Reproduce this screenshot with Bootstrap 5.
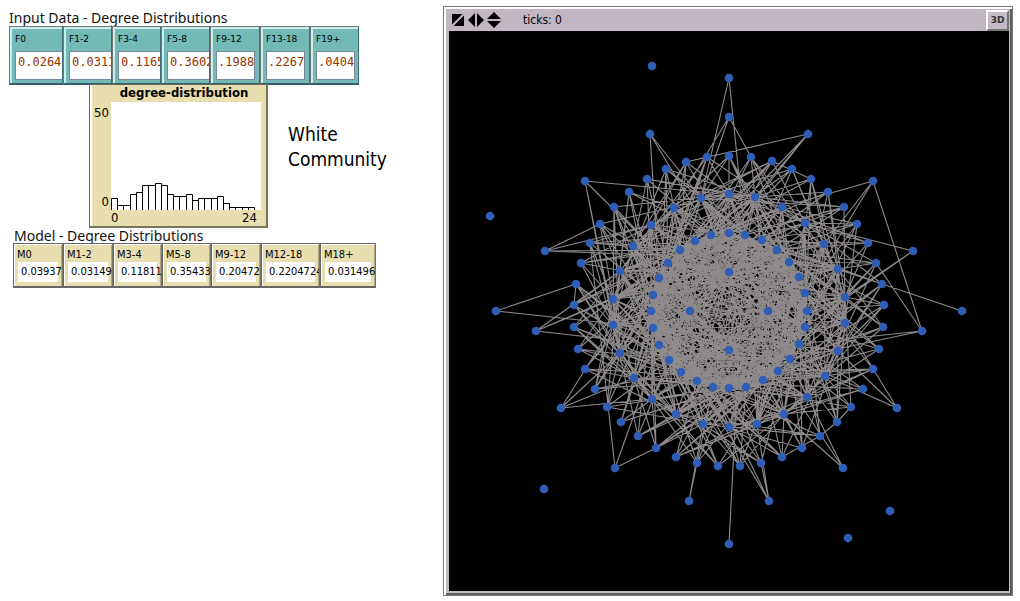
<!DOCTYPE html>
<html lang="en">
<head>
<meta charset="utf-8">
<meta name="viewport" content="width=device-width, initial-scale=1">
<title>Degree Distributions</title>
<link href="https://cdn.jsdelivr.net/npm/bootstrap@5.3.0/dist/css/bootstrap.min.css" rel="stylesheet">
<style>
body{font-family:"DejaVu Sans Condensed","DejaVu Sans",sans-serif;color:#000;background:#fff}
.model-page{display:grid;grid-template-columns:435px minmax(0,1fr);padding:6px 7px 4px 8px}
.section-title{font-family:"Noto Sans","Open Sans",sans-serif;font-size:14px;line-height:16px;font-weight:400;margin:0;padding-left:1px;color:#111}
.section-title.model{padding-left:6px;line-height:15px}
.inputs{margin-left:1px}
.reports{margin-left:5px}
.beige{background:repeating-conic-gradient(#dfe6a4 0 25%,#efd8bc 0 50%) 0 0/4px 4px}
.teal{background:repeating-conic-gradient(#6cc4b0 0 25%,#78b0bc 0 50%) 0 0/4px 4px}
.tile{flex:0 0 auto;width:49px;overflow:hidden;line-height:12px}
.tile.wide{width:50px}
.tile.wider{width:56px}
.tile.widest{width:59px}
.input-tile{height:59px;padding:7px 0 0 5px;border:solid;border-width:1px 1px 2px;border-color:#777 #456d78 #355e6b #777;box-shadow:inset 2px 2px #c9f0ec}
.input-tile:first-child{width:54px}
.input-tile label{display:block;font-family:"DejaVu Sans",sans-serif;font-size:9px;line-height:10px;margin-bottom:7px;white-space:nowrap}
.input-tile input{display:block;width:60px;height:29px;border:1px solid #789;border-radius:0;padding:0 0 8px 2px;font:12px/18px "DejaVu Sans Mono",monospace;color:#993300;background:#fff}
.input-tile.full input{width:39px;padding-left:1px}
.report-tile{height:45px;padding:5px 3px 0 3px;border:1px solid #666;border-right-color:#776;border-bottom-width:2px;box-shadow:inset 1px 1px #fff,inset -1px 0 #aaa585;font-size:11px}
.report-tile span{display:block;white-space:nowrap}
.report-tile output{display:block;height:20px;margin:1px 1px 0;padding:0 0 0 3px;line-height:19px;background:#fff;white-space:nowrap}
.plot{width:179px;height:144px;margin:-1px 0 0 81px;border:1px solid #666;border-bottom:2px solid #77755a;border-right:2px solid #77755a;box-shadow:inset 2px 0 #fff;display:grid;grid-template-columns:21px 150px;grid-template-rows:17px 108px 16px;font-size:13px;line-height:16px}
.plot h2{grid-column:1/3;font-size:13px;line-height:15px;font-weight:700;text-align:center;margin:0 0 0 17px}
.plot .axis{text-align:right;padding:3px 2px 0 0}
.histogram{background:#fff}
.note{font-size:19px;line-height:25px;margin:37px 0 0 20px}
.world{border:1px solid #777;box-shadow:inset 2px 2px #fff,inset -2px -2px #566260;padding:0 3px 4px 5px;background:repeating-conic-gradient(#b9c0ba 0 25%,#c8acca 0 50%) 0 0/4px 4px}
.world-bar{height:24px;font-size:12px;padding:2px 0 0 0}
.world-bar button{width:23px;height:21px;border:solid;border-width:2px;border-color:#fff #777 #777 #fff;background:#c4bcc4;font:bold 9px/14px "DejaVu Sans",sans-serif;padding:0;color:#333}
.world-bar .resize-icon{background:none;border:0;width:18px;height:18px}
.resize-icon svg{display:block;margin:auto}
.world-view,.histogram{display:block}
.world-view{width:100%;height:auto;background:#000}
</style>
</head>
<body>
<main class="model-page">
  <div class="pt-1">
    <h1 class="section-title">Input Data - Degree Distributions</h1>
    <form class="d-flex inputs">
      <div class="tile input-tile teal"><label for="f0">F0</label><input id="f0" value="0.0264"></div>
      <div class="tile input-tile teal"><label for="f1">F1-2</label><input id="f1" value="0.0311"></div>
      <div class="tile input-tile teal"><label for="f3">F3-4</label><input id="f3" value="0.1165"></div>
      <div class="tile input-tile teal"><label for="f5">F5-8</label><input id="f5" value="0.3602"></div>
      <div class="tile input-tile teal full wide"><label for="f9">F9-12</label><input id="f9" value=".1988"></div>
      <div class="tile input-tile teal full wide"><label for="f13">F13-18</label><input id="f13" value=".2267"></div>
      <div class="tile input-tile teal full"><label for="f19">F19+</label><input id="f19" value=".0404"></div>
    </form>
    <div class="d-flex">
      <section class="plot beige">
        <h2>degree-distribution</h2>
        <div class="axis d-flex flex-column justify-content-between"><span>50</span><span>0</span></div>
        <svg class="histogram" id="histogram" width="150" height="108" viewBox="0 0 150 108"></svg>
        <span></span>
        <div class="d-flex justify-content-between pe-1"><span>0</span><span>24</span></div>
      </section>
      <p class="note">White<br>Community</p>
    </div>
    <h2 class="section-title model">Model - Degree Distributions</h2>
    <div class="d-flex reports">
      <div class="tile report-tile beige wide"><span>M0</span><output>0.03937</output></div>
      <div class="tile report-tile beige wide"><span>M1-2</span><output>0.03149</output></div>
      <div class="tile report-tile beige"><span>M3-4</span><output>0.11811</output></div>
      <div class="tile report-tile beige"><span>M5-8</span><output>0.35433</output></div>
      <div class="tile report-tile beige wide"><span>M9-12</span><output>0.20472</output></div>
      <div class="tile report-tile beige widest"><span>M12-18</span><output>0.2204724</output></div>
      <div class="tile report-tile beige wider"><span>M18+</span><output>0.031496</output></div>
    </div>
  </div>
  <section class="world">
    <div class="world-bar d-flex align-items-center">
      <button class="resize-icon" aria-label="Resize both"><svg width="14" height="14" viewBox="0 0 14 14"><path d="M1 1H13V13H1Z"/><path d="M1 13 13 1" stroke="#c4bcc4" stroke-width="2"/></svg></button>
      <button class="resize-icon" aria-label="Resize width"><svg width="18" height="14" viewBox="0 0 18 14"><path d="M8 0V14L1 7ZM10 0V14L17 7Z"/></svg></button>
      <button class="resize-icon" aria-label="Resize height"><svg width="16" height="16" viewBox="0 0 16 16"><path d="M1 7H15L8 0ZM1 9H15L8 16Z"/></svg></button>
      <span class="ps-3 ms-1">ticks: 0</span>
      <button class="ms-auto">3D</button>
    </div>
    <svg class="world-view" id="world" viewBox="449 31 560 560" role="img" aria-label="Network of agents"></svg>
  </section>
</main>
<script src="https://cdn.jsdelivr.net/npm/bootstrap@5.3.0/dist/js/bootstrap.bundle.min.js"></script>
<script>
// Histogram bars
const counts=[12,5,5,16,18,25,25,27,25,16,14,14,16,10,12,12,12,14,7,3,3,3,3];
let outline='';
counts.forEach((h,i)=>{
  const a=Math.round(i*6.22)+.5,b=Math.round((i+1)*6.22)+.5,y=108.5-h;
  outline+=`M${a} 108V${y}H${b}V108`;
});
document.getElementById('histogram').innerHTML=`<path d="${outline}" fill="none" stroke="#000"/>`;

// Network: concentric rings of nodes
const parse=s=>s.split(' ').map(p=>p.split(',').map(Number));
const core=parse('729,272 768,311 729,350 690,311');
const inner=parse('729,233 745,235 762,240 777,250 789,262 799,277 805,293 807,311 805,327 799,344 790,359 778,371 763,380 746,387 729,388 713,387 697,381 681,372 669,360 659,345 653,328 651,311 653,295 659,278 668,263 680,250 695,241 711,235');
const middle=parse('729,194 755,197 782,207 805,223 824,244 838,269 845,297 845,323 838,351 825,376 807,397 784,414 757,424 729,427 703,424 676,414 652,399 634,378 620,353 613,325 613,299 620,271 633,246 651,225 674,208 701,198');
const outer=parse('729,156 751,157 772,161 792,169 811,179 828,192 844,207 857,224 868,243 876,263 882,284 884,305 883,327 879,349 873,369 863,389 851,407 837,422 820,436 802,448 782,457 761,463 740,466 718,466 697,463 676,457 656,448 638,436 621,422 607,407 595,389 585,369 578,349 574,327 574,305 576,284 581,263 590,243 600,224 614,207 629,192 647,179 666,169 686,162 707,157');
const rim=parse('729,117 808,134 873,181 913,251 922,331 897,408 843,468 769,501 689,501 615,468 561,408 536,331 545,251 585,181 650,134 729,78 729,544 496,311 962,311 652,66 490,216 544,489 848,538 890,511');
// Each row: a rim node followed by its neighbours
const links=`729,78 701,198 745,235
729,117 751,157 701,198 674,208
650,134 659,278 711,235 729,233
808,134 686,162 755,197 729,233 711,235
873,181 922,331 782,207 824,244 805,293
585,181 755,197 620,353 613,325 668,263
545,251 600,224 651,225 680,250 659,255
496,311 576,284 653,328
536,331 613,299 620,271 659,278 659,345
561,408 613,325 620,353 634,378 652,399
615,468 656,448 590,243 659,345
689,501 703,424 713,387 697,463
729,544 745,235
769,501 761,463 757,424 713,387 697,381
843,468 782,414 789,359 778,371
897,408 838,351 845,323 825,376
922,331 876,263 799,344 790,359
913,251 805,223 845,297 805,327
962,311 838,269
686,162 707,157
811,179 772,161
837,422 851,407
820,436 837,422
782,457 820,436
576,284 574,305`;
let edges='';
const join=(a,b)=>{edges+=`M${a[0]} ${a[1]}L${b[0]} ${b[1]}`};
links.split('\n').forEach(r=>{const p=parse(r);p.slice(1).forEach(q=>join(p[0],q))});
let seed=71;
const rand=()=>(seed=(seed*16807)%2147483647)/2147483647;
const dist=(a,b)=>Math.hypot(a[0]-b[0],a[1]-b[1]);
function connect(from,to,n,limit){
  from.forEach(a=>{for(let k=0,t=0;k<n&&t<200;t++){
    const b=to[Math.floor(rand()*to.length)];
    if(b!==a&&dist(a,b)<limit){join(a,b);k++}
  }});
}
connect(outer,middle,3,150);
connect(outer,inner,4,190);
connect(middle,inner,12,190);
connect(middle,middle,2,170);
connect(inner,inner,8,160);
connect(core,inner,20,140);
connect(core,middle,12,170);
const dots=[core,inner,middle,outer,rim].flat().map(p=>`<circle cx="${p[0]}" cy="${p[1]}" r="4.3"/>`).join('');
document.getElementById('world').innerHTML=`<path d="${edges}" fill="none" stroke="#8e8a8c" stroke-width="1.1"/><g fill="#305db5">${dots}</g>`;
</script>
</body>
</html>
